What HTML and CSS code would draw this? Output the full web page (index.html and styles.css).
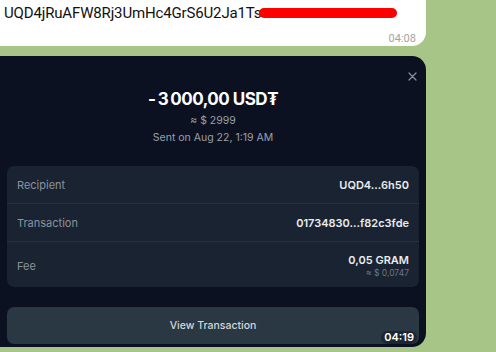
FILE: index.html
```html
<!DOCTYPE html>
<html>
<head>
<meta charset="utf-8">
<link rel="stylesheet" href="styles.css">
</head>
<body>
<div class="chat">
  <div class="bubble">
    <div class="msg"><span class="addr">UQD4jRuAFW8Rj3UmHc4GrS6U2Ja1Ts</span><span class="redact"></span></div>
    <div class="msg-time">04:08</div>
  </div>
  <div class="card">
    <button class="close" aria-label="Close">
      <svg width="9" height="9" viewBox="0 0 9 9"><path d="M1 1L8 8M8 1L1 8" stroke="#8b919b" stroke-width="1.2" stroke-linecap="round"/></svg>
    </button>
    <div class="head">
      <div class="amount">-&#8239;3&#8239;000,00 USD₮</div>
      <div class="usd">≈ $ 2999</div>
      <div class="date">Sent on Aug 22, 1:19 AM</div>
    </div>
    <div class="info">
      <div class="row">
        <span class="label">Recipient</span>
        <span class="value">UQD4...6h50</span>
      </div>
      <div class="row">
        <span class="label">Transaction</span>
        <span class="value">01734830...f82c3fde</span>
      </div>
      <div class="row fee">
        <span class="label">Fee</span>
        <span class="value-col">
          <span class="value">0,05 GRAM</span>
          <span class="sub">≈ $ 0,0747</span>
        </span>
      </div>
    </div>
    <button class="view">View Transaction</button>
    <span class="time-badge">04:19</span>
  </div>
</div>
</body>
</html>
```

FILE: styles.css
```css
* { box-sizing: border-box; }
html, body { margin: 0; padding: 0; }
body {
  width: 496px;
  height: 352px;
  overflow: hidden;
  background: #a8c588;
  font-family: Inter, "Noto Sans", sans-serif;
}
.chat {
  display: flex;
  flex-direction: column;
  gap: 10px;
  width: 426px;
}
.bubble {
  background: #ffffff;
  height: 46px;
  border-radius: 0 0 14px 0;
  padding: 3px 10px 0 4px;
  display: flex;
  flex-direction: column;
  font-family: Roboto, sans-serif;
}
.msg {
  font-size: 15px;
  line-height: 20px;
  color: #111;
  display: flex;
  align-items: center;
  white-space: nowrap;
  letter-spacing: -0.15px;
}
.redact {
  display: inline-block;
  width: 138px;
  height: 10px;
  background: #ff0000;
  border-radius: 5px;
  margin-left: -2px;
}
.msg-time {
  align-self: flex-end;
  font-size: 11px;
  line-height: 13px;
  color: #a3a3a3;
  margin-top: 9px;
}
.card {
  position: relative;
  background: #0b1120;
  height: 291px;
  border-radius: 0 14px 14px 0;
  padding: 33px 7px 3px 7px;
  display: flex;
  flex-direction: column;
}
.close {
  position: absolute;
  right: 8px;
  top: 15px;
  width: 11px;
  height: 11px;
  padding: 0;
  border: 0;
  background: none;
  display: flex;
  align-items: center;
  justify-content: center;
}
.head {
  display: flex;
  flex-direction: column;
  align-items: center;
}
.amount {
  font-size: 17px;
  line-height: 20px;
  font-weight: 700;
  color: #ffffff;
  letter-spacing: -0.5px;
}
.usd {
  margin-top: 5px;
  font-size: 10.5px;
  line-height: 13px;
  color: #9aa0aa;
}
.date {
  margin-top: 4px;
  font-size: 10.5px;
  line-height: 13px;
  color: #9aa0aa;
}
.info {
  margin-top: 22px;
  background: #1a2331;
  border-radius: 7px;
  display: flex;
  flex-direction: column;
}
.row {
  height: 38px;
  display: flex;
  align-items: center;
  justify-content: space-between;
  padding: 0 10px;
  border-bottom: 1px solid #253040;
}
.row.fee {
  height: 45px;
  border-bottom: 0;
  padding-top: 2px;
}
.label {
  font-size: 11px;
  color: #8b929d;
}
.value {
  font-size: 11px;
  font-weight: 600;
  color: #e9ecf0;
}
.value-col {
  display: flex;
  flex-direction: column;
  align-items: flex-end;
  gap: 1px;
}
.sub {
  font-size: 8.5px;
  color: #6f7783;
}
.view {
  margin-top: 20px;
  height: 37px;
  border: 0;
  border-radius: 7px;
  background: #2a3843;
  color: #d3d7dc;
  font-family: Inter, sans-serif;
  font-size: 10.5px;
  font-weight: 500;
}
.time-badge {
  position: absolute;
  right: 9px;
  bottom: 3px;
  height: 13px;
  padding: 0 3px;
  border-radius: 7px;
  background: #1d2731;
  color: #ffffff;
  font-size: 11px;
  line-height: 13px;
  font-weight: 600;
}
```
